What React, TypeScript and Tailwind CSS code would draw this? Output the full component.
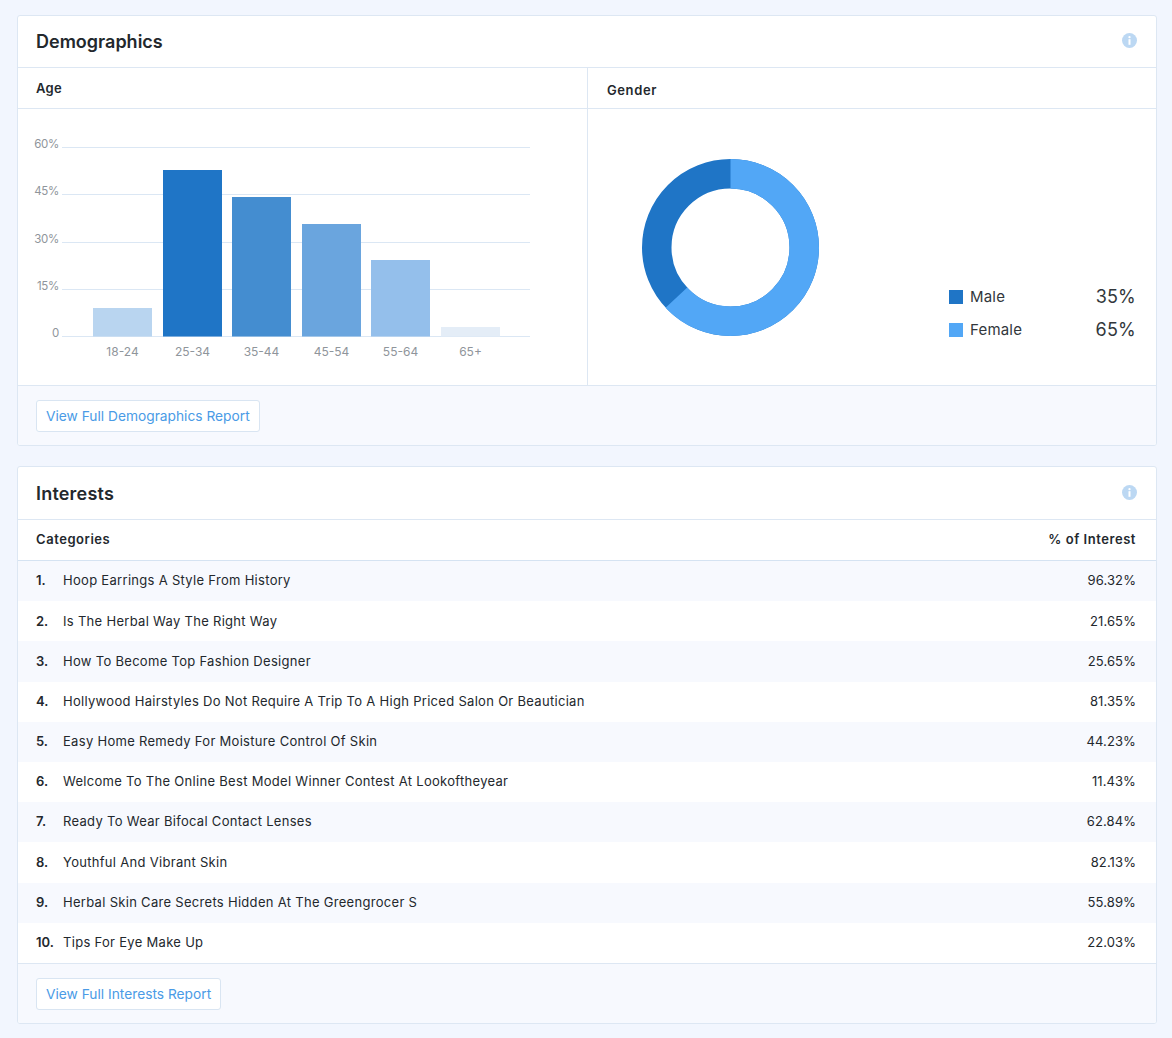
import React from 'react';

const ageBars = [
  { label: '18-24', x: 75, top: 199, color: '#b9d5f0' },
  { label: '25-34', x: 145, top: 61, color: '#1f75c6' },
  { label: '35-44', x: 214, top: 88, color: '#448dd0' },
  { label: '45-54', x: 284, top: 115, color: '#6aa5de' },
  { label: '55-64', x: 353, top: 151, color: '#94bfeb' },
  { label: '65+', x: 423, top: 218, color: '#e4edf7' },
];

const axis = [
  { label: '60%', y: 38 },
  { label: '45%', y: 85 },
  { label: '30%', y: 133 },
  { label: '15%', y: 180 },
  { label: '0', y: 227 },
];

const interests = [
  ['Hoop Earrings A Style From History', '96.32%'],
  ['Is The Herbal Way The Right Way', '21.65%'],
  ['How To Become Top Fashion Designer', '25.65%'],
  ['Hollywood Hairstyles Do Not Require A Trip To A High Priced Salon Or Beautician', '81.35%'],
  ['Easy Home Remedy For Moisture Control Of Skin', '44.23%'],
  ['Welcome To The Online Best Model Winner Contest At Lookoftheyear', '11.43%'],
  ['Ready To Wear Bifocal Contact Lenses', '62.84%'],
  ['Youthful And Vibrant Skin', '82.13%'],
  ['Herbal Skin Care Secrets Hidden At The Greengrocer S', '55.89%'],
  ['Tips For Eye Make Up', '22.03%'],
];

const InfoIcon = () => (
  <svg width="15" height="15" viewBox="0 0 15 15" className="mb-[2px]">
    <circle cx="7.5" cy="7.5" r="7.5" fill="#bcd8f3" />
    <rect x="6.5" y="6.2" width="2" height="5.6" fill="#fff" />
    <circle cx="7.5" cy="4.2" r="1.15" fill="#fff" />
  </svg>
);

const ReportButton = ({ children }: { children: React.ReactNode }) => (
  <div className="h-[60px] pl-[18px] pt-[14px] bg-[#f7f9fe] border-t border-[#dde7f3]">
    <button className="h-[32px] px-[9px] bg-white border border-[#d9e5f2] rounded-[3px] text-[13.75px] text-[#4a9be6]">
      {children}
    </button>
  </div>
);

const AgeChart = () => (
  <svg width="569" height="276" viewBox="0 0 569 276">
    {axis.map((a) => (
      <g key={a.label}>
        <line x1="44" x2="512" y1={a.y + 0.5} y2={a.y + 0.5} stroke="#dbe7f4" />
        <text x="41" y={a.y + 1} textAnchor="end" fontSize="11.5" letterSpacing="-0.3" fill="#8f959b">
          {a.label}
        </text>
      </g>
    ))}
    {ageBars.map((b) => (
      <g key={b.label}>
        <rect x={b.x} y={b.top} width="59" height={227.5 - b.top} fill={b.color} />
        <text x={b.x + 29.5} y="247" textAnchor="middle" fontSize="12" fill="#8f959b">
          {b.label}
        </text>
      </g>
    ))}
  </svg>
);

const Donut = () => {
  const r = 73.75;
  const c = 2 * Math.PI * r;
  return (
    <svg width="177" height="177" viewBox="0 0 177 177" className="-rotate-90">
      <circle cx="88.5" cy="88.5" r={r} fill="none" stroke="#1f75c6" strokeWidth="29.5" />
      <circle
        cx="88.5"
        cy="88.5"
        r={r}
        fill="none"
        stroke="#52a7f6"
        strokeWidth="29.5"
        strokeDasharray={`${c * 0.63} ${c}`}
      />
    </svg>
  );
};

const LegendRow = ({ color, label, value }: { color: string; label: string; value: string }) => (
  <div className="flex items-center h-[33px]">
    <span className={`w-[14px] h-[14px] ${color}`} />
    <span className="ml-[7px] mt-[2px] text-[15px] tracking-[0.2px] text-[#32373c]">{label}</span>
    <span className="ml-auto text-[18px] tracking-[0.2px] text-[#32373c]">{value}</span>
  </div>
);

export default function App() {
  return (
    <div
      className="min-h-[1038px] bg-[#f2f6fe] pt-[15px] pl-[17px] pr-[15px]"
      style={{ fontFamily: 'Inter, "Noto Sans", sans-serif' }}
    >
      {/* Demographics */}
      <section className="bg-white border border-[#dde7f3] rounded-[3px] overflow-hidden">
        <div className="flex items-center justify-between h-[52px] pl-[18px] pr-[19px] border-b border-[#dde7f3]">
          <h2 className="text-[18px] font-semibold text-[#23282d]">Demographics</h2>
          <InfoIcon />
        </div>
        <div className="flex h-[317px]">
          <div className="w-[570px] border-r border-[#dde7f3]">
            <div className="h-[41px] pl-[18px] pt-[10px] border-b border-[#dde7f3] text-[13px] leading-[20px] font-semibold tracking-[0.3px] text-[#23282d]">
              Age
            </div>
            <AgeChart />
          </div>
          <div className="flex-1">
            <div className="h-[41px] pl-[19px] pt-[12px] border-b border-[#dde7f3] text-[13px] leading-[20px] font-semibold tracking-[0.6px] text-[#23282d]">
              Gender
            </div>
            <div className="flex">
              <div className="ml-[54px] mt-[50px]">
                <Donut />
              </div>
              <div className="w-[187px] ml-auto mr-[20px] mt-[171px]">
                <LegendRow color="bg-[#1f75c6]" label="Male" value="35%" />
                <LegendRow color="bg-[#52a7f6]" label="Female" value="65%" />
              </div>
            </div>
          </div>
        </div>
        <ReportButton>View Full Demographics Report</ReportButton>
      </section>

      {/* Interests */}
      <section className="mt-[20px] bg-white border border-[#dde7f3] rounded-[3px] overflow-hidden">
        <div className="flex items-center justify-between h-[53px] pl-[18px] pr-[19px] border-b border-[#dde7f3]">
          <h2 className="text-[18px] font-semibold tracking-[0.2px] text-[#23282d]">Interests</h2>
          <InfoIcon />
        </div>
        <div className="flex items-center justify-between h-[41px] pl-[18px] pr-[20px] border-b border-[#d5e3f2] text-[13px] font-semibold tracking-[0.55px] text-[#23282d]">
          <span>Categories</span>
          <span>% of Interest</span>
        </div>
        <div>
          {interests.map(([name, pct], i) => (
            <div
              key={name}
              className="flex items-center h-[40.2px] pl-[18px] pr-[20px] text-[13px] text-[#23282d] odd:bg-[#f7f9fe]"
            >
              <span className="w-[27px] font-semibold">{i + 1}.</span>
              <span className="flex-1 tracking-[0.3px]">{name}</span>
              <span className="tracking-[0.1px]">{pct}</span>
            </div>
          ))}
        </div>
        <ReportButton>View Full Interests Report</ReportButton>
      </section>
    </div>
  );
}
